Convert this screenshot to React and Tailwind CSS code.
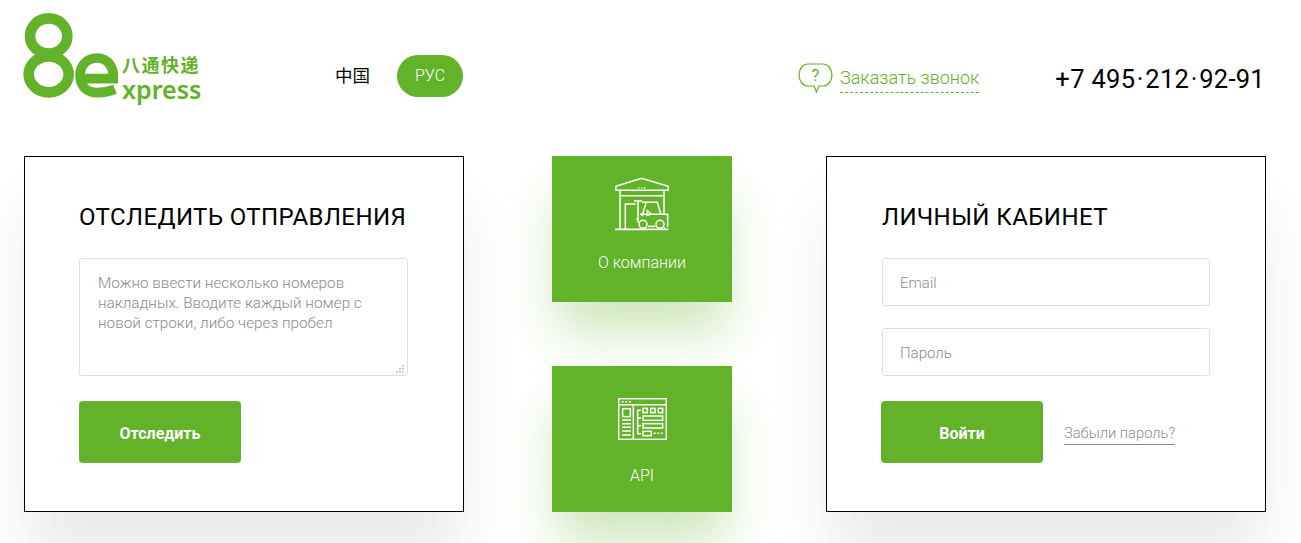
const FONT = "font-['Roboto','Noto_Sans_CJK_SC',sans-serif]"
const CARD_SHADOW = 'shadow-[0_50px_60px_-5px_rgba(0,0,0,0.09)]'

function LogoMark() {
  return (
    <svg width="95" height="87" viewBox="69 39 285 261" fill="none" stroke="#62b22a" strokeWidth="32">
      <ellipse cx="146" cy="108" rx="56" ry="53" />
      <ellipse cx="146" cy="223" rx="60" ry="54" />
      <path d="M240 236 H340 C342 200 322 174 291 174 C259 174 240 198 240 226 C240 258 260 278 292 278 C312 278 328 275 345 268" strokeWidth="29" />
    </svg>
  )
}

function WarehouseIcon() {
  return (
    <svg width="54" height="54" viewBox="225 80 162 162" fill="none" stroke="#fff" strokeWidth="4.5">
      <path d="M228 108 L305 84 L385 108 V120 H228 Z" />
      <path d="M240 120 V236 M372 120 V190 M240 136 H372" />
      <path d="M225 237 H385" strokeWidth="5" />
      <path d="M294 112 H298 M303 112 H307 M312 112 H316" />
      <path d="M287 161 H256 V236" />
      <path d="M282 152 H306 M294 152 V216 M294 206 H288" />
      <path d="M306 156 H352 L362 190 M318 158 L306 198 M300 192 H383 V230 M376 232 H372" />
      <path d="M322 180 L334 192 L320 196 Z" strokeWidth="3.5" />
      <circle cx="309" cy="222" r="12" />
      <circle cx="360" cy="222" r="12" />
      <path d="M324 228 H346" />
    </svg>
  )
}

function ApiIcon() {
  return (
    <svg width="49" height="42" viewBox="231 114 147 126" fill="none" stroke="#fff" strokeWidth="4.5">
      <rect x="233" y="116" width="143" height="122" />
      <path d="M233 134 H376 M277 134 V238" />
      <path d="M242 125 H248 M253 125 H259 M264 125 H270" />
      <rect x="245" y="146" width="23" height="24" />
      <path d="M243 180 H270 M243 191 H270 M243 202 H270 M243 213 H270 M243 225 H270" />
      <path d="M300 151 H290 V221 H300 M290 174 H300 M290 197 H300" />
      <rect x="306" y="145" width="13" height="13" />
      <rect x="329" y="145" width="13" height="13" />
      <rect x="352" y="145" width="13" height="13" />
      <rect x="306" y="168" width="59" height="13" />
      <rect x="306" y="191" width="59" height="13" />
      <rect x="306" y="214" width="25" height="13" />
      <path d="M338 220 H344 M349 220 H355 M360 220 H366" />
    </svg>
  )
}

function BubbleIcon() {
  return (
    <svg width="35" height="32" viewBox="0 0 35 32" fill="none" stroke="#62b22a" strokeWidth="1.2">
      <path d="M10 1 H25 C30 1 34 6 34 12 C34 18 30 23 25 23 H21 L18.5 29 L16 23 H10 C5 23 1 18 1 12 C1 6 5 1 10 1 Z" />
      <text x="17.5" y="18" textAnchor="middle" fontSize="16" fill="#62b22a" stroke="none" fontFamily="Roboto">?</text>
    </svg>
  )
}

function ResizeGrip() {
  return (
    <svg width="9" height="9" viewBox="0 0 9 9" fill="#c4c4c4" className="absolute right-[3px] bottom-[2px]">
      <rect x="6" y="0" width="2" height="1.5" />
      <rect x="3" y="3" width="2" height="1.5" />
      <rect x="6" y="3" width="2" height="1.5" />
      <rect x="0" y="6" width="2" height="1.5" />
      <rect x="3" y="6" width="2" height="1.5" />
      <rect x="6" y="6" width="2" height="1.5" />
    </svg>
  )
}

function Tile({ icon, label, iconClass, labelClass }) {
  return (
    <a className="h-[146px] flex flex-col items-center bg-[#62b22a] text-white shadow-[0_35px_50px_-5px_rgba(98,178,42,0.32)]">
      <div className={iconClass}>{icon}</div>
      <span className={`text-[16px] font-light ${labelClass}`}>{label}</span>
    </a>
  )
}

export default function App() {
  return (
    <div className={`h-[543px] w-[1301px] overflow-hidden bg-white ${FONT}`}>
      <header className="h-[156px] flex items-start pl-[23px] pr-[36px]">
        <div className="flex items-start pt-[13px] w-[312px]">
          <LogoMark />
          <div className="ml-[4px] pt-[43px] text-[#62b22a] leading-none">
            <div className="text-[18px] font-bold tracking-[1.5px] h-[20px] leading-[20px]">八通快递</div>
            <div className="text-[25px] font-semibold leading-[26px] font-['Noto_Sans']">xpress</div>
          </div>
        </div>

        <div className="flex items-center pt-[55px] h-[97px]">
          <span className="text-[17.5px] text-black w-[62px]">中国</span>
          <span className="h-[42px] w-[66px] rounded-[21px] bg-[#62b22a] text-white text-[16px] flex items-center justify-center font-light">РУС</span>
        </div>

        <div className="ml-auto flex items-center pt-[63px]">
          <BubbleIcon />
          <span className="ml-[7px] text-[18px] font-light text-[#62b22a] border-b border-dashed border-[#62b22a] leading-[26px] h-[28px]">Заказать звонок</span>
          <span className="ml-[76px] text-[25.5px] tracking-[0.3px] text-black leading-[30px]">
            +7 495<span className="mx-[1.5px]">·</span>212<span className="mx-[1.5px]">·</span>92-91
          </span>
        </div>
      </header>

      <main className="flex items-start pl-[24px]">
        <section className={`w-[440px] h-[356px] border border-black bg-white pl-[54px] pt-[44px] ${CARD_SHADOW}`}>
          <h2 className="text-[24px] leading-[32px] tracking-[0.4px] text-black">ОТСЛЕДИТЬ ОТПРАВЛЕНИЯ</h2>
          <div className="relative mt-[25px] w-[329px] h-[118px]">
            <textarea
              readOnly
              placeholder="Можно ввести несколько номеров накладных. Вводите каждый номер с новой строки, либо через пробел"
              className="block resize-none w-full h-full border border-[#dedede] rounded-[3px] px-[18px] pt-[14px] text-[15.3px] leading-[20px] font-light placeholder:text-[#8b8b8b] outline-none"
            />
            <ResizeGrip />
          </div>
          <button className="mt-[25px] pt-[3px] w-[162px] h-[62px] rounded-[4px] bg-[#62b22a] text-white font-bold text-[16px]">Отследить</button>
        </section>

        <div className="ml-[88px] w-[180px] flex flex-col gap-[64px]">
          <Tile icon={<WarehouseIcon />} label="О компании" iconClass="pt-[21px]" labelClass="mt-[20px]" />
          <Tile icon={<ApiIcon />} label="API" iconClass="pt-[32px]" labelClass="mt-[24px]" />
        </div>

        <section className={`ml-[94px] w-[440px] h-[356px] border border-black bg-white pl-[55px] pt-[44px] ${CARD_SHADOW}`}>
          <h2 className="text-[24px] leading-[32px] tracking-[0.45px] text-black">ЛИЧНЫЙ КАБИНЕТ</h2>
          <input readOnly placeholder="Email" className="block mt-[25px] w-[328px] h-[48px] border border-[#dedede] rounded-[3px] pl-[17px] pt-[2px] text-[15px] font-light placeholder:text-[#8b8b8b] outline-none" />
          <input readOnly placeholder="Пароль" className="block mt-[22px] w-[328px] h-[48px] border border-[#dedede] rounded-[3px] pl-[17px] pt-[2px] text-[15px] font-light placeholder:text-[#8b8b8b] outline-none" />
          <div className="mt-[25px] -ml-[1px] flex items-center">
            <button className="pt-[3px] w-[162px] h-[62px] rounded-[4px] bg-[#62b22a] text-white font-bold text-[16px]">Войти</button>
            <a className="ml-[21px] mt-[2px] text-[14.7px] font-light text-[#8b8b8b] border-b border-[#8b8b8b] leading-[22px]">Забыли пароль?</a>
          </div>
        </section>
      </main>
    </div>
  )
}
